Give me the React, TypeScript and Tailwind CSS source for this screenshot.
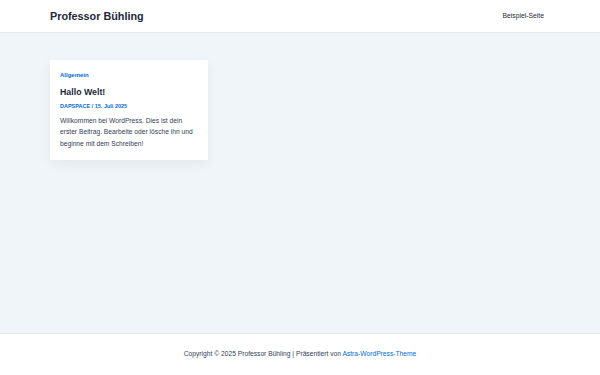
import React from 'react';

const App = () => {
  return (
    <div className="min-h-[375px] flex flex-col bg-[#f0f5fa] text-[#334155]" style={{ fontFamily: '"Liberation Sans", Arial, sans-serif' }}>
      <header className="h-[33px] bg-white border-b border-[#e2e8f0] flex items-center justify-between pl-[50px] pr-[56px]">
        <h1 className="text-[10.8px] font-bold text-[#1e293b]">Professor Bühling</h1>
        <nav className="text-[6.8px] text-[#1e293b]">Beispiel-Seite</nav>
      </header>

      <main className="flex-1 pt-[27px] px-[50px]">
        <article className="w-[158px] h-[100px] bg-white shadow-[0_4px_12px_rgba(0,0,0,0.06)] px-[10px] pt-[11px]">
          <div className="text-[6px] font-bold text-[#046bd2] leading-[8px]">Allgemein</div>
          <h2 className="mt-[7px] text-[8.8px] font-bold text-[#1e293b] leading-[12px]">Hallo Welt!</h2>
          <div className="mt-[4px] text-[5.5px] font-bold text-[#046bd2] leading-[8px]">DAPSPACE / 15. Juli 2025</div>
          <p className="mt-[5px] text-[6.7px] leading-[11.3px] text-[#334155]">
            Willkommen bei WordPress. Dies ist dein erster Beitrag. Bearbeite oder lösche ihn und beginne mit dem Schreiben!
          </p>
        </article>
      </main>

      <footer className="h-[42px] bg-white border-t border-[#e2e8f0] flex items-center justify-center text-[6.7px] text-[#334155]">
        <span>
          Copyright © 2025 Professor Bühling | Präsentiert von <span className="text-[#046bd2]">Astra-WordPress-Theme</span>
        </span>
      </footer>
    </div>
  );
};

export default App;
